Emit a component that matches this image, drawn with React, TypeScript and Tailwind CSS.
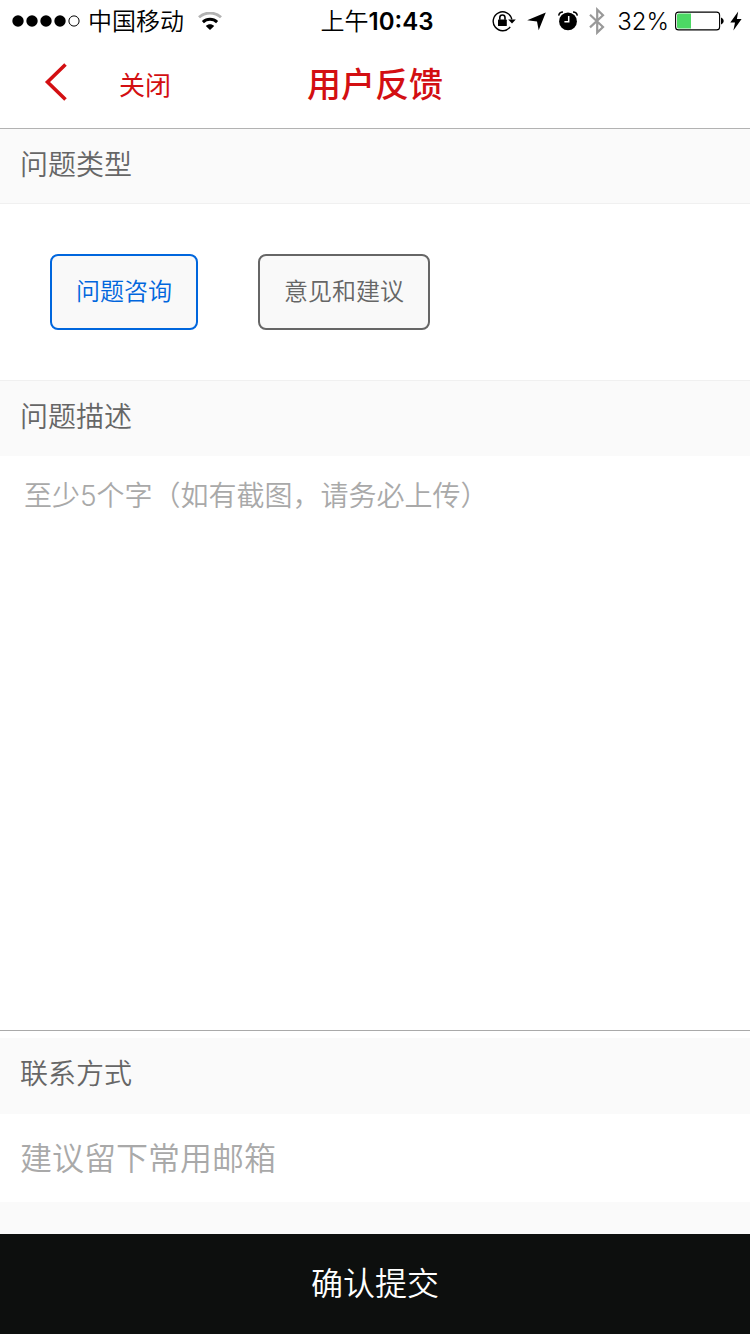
import { useState } from "react";

function SignalDots() {
  return (
    <svg width="68" height="12" viewBox="0 0 68 12" aria-hidden="true">
      <circle cx="6" cy="6" r="5.7" />
      <circle cx="20" cy="6" r="5.7" />
      <circle cx="34" cy="6" r="5.7" />
      <circle cx="48" cy="6" r="5.7" />
      <circle cx="62" cy="6" r="5.1" fill="none" stroke="#000" strokeWidth="1" />
    </svg>
  );
}

function WifiIcon() {
  return (
    <svg width="24" height="18" viewBox="0 0 24 18" fill="none" aria-hidden="true">
      <path d="M1 5.3C7.2 -0.4 16.8 -0.4 23 5.3" stroke="#b2b2b2" strokeWidth="2.8" />
      <path d="M4.9 10.2C9 6.4 15 6.4 19.1 10.2" stroke="#000" strokeWidth="3" />
      <path d="M12 18L7.8 13.9C10.2 11.8 13.8 11.8 16.2 13.9Z" fill="#000" />
    </svg>
  );
}

function RotationLockIcon() {
  return (
    <svg width="24" height="22" viewBox="0 0 24 22" fill="none" aria-hidden="true">
      <path d="M18.2 16.8A9.4 9.4 0 1 1 19.8 9.4" stroke="#000" strokeWidth="1.4" />
      <path d="M16.2 9.4H23.8L20 13.6Z" fill="#000" />
      <rect x="6" y="9.6" width="8.8" height="6.4" rx="0.6" fill="#000" />
      <path d="M7.8 9.8V7.6A2.6 2.6 0 0 1 13 7.6V9.8" stroke="#000" strokeWidth="1.6" />
    </svg>
  );
}

function LocationIcon() {
  return (
    <svg width="20" height="20" viewBox="0 0 20 20" aria-hidden="true">
      <path d="M18.8 1.4L11.7 19.2L10 10.4L0.2 9.2Z" />
    </svg>
  );
}

function AlarmIcon() {
  return (
    <svg width="20" height="20" viewBox="0 0 20 20" fill="none" aria-hidden="true">
      <circle cx="10" cy="10.4" r="8.9" fill="#000" />
      <path d="M0.7 4.6C1 2.4 2.6 0.9 5 0.9M19.3 4.6C19 2.4 17.4 0.9 15 0.9" stroke="#000" strokeWidth="1.5" />
      <path d="M10.7 5V10.7H6.4" stroke="#fff" strokeWidth="1.5" />
    </svg>
  );
}

function BluetoothIcon() {
  return (
    <svg width="16" height="28" viewBox="0 0 16 28" fill="none" aria-hidden="true">
      <path d="M1 7.8L14 20L8.2 25.6V2.6L14 8.2L1 20.4" stroke="#999" strokeWidth="2.2" />
    </svg>
  );
}

function BatteryIcon() {
  return (
    <svg width="49" height="20" viewBox="0 0 49 20" fill="none" aria-hidden="true">
      <rect x="0.6" y="1.1" width="44" height="17.8" rx="3" stroke="#000" strokeWidth="1.1" />
      <path d="M3.6 2.6H16V17.4H3.6A1.6 1.6 0 0 1 2 15.8V4.2A1.6 1.6 0 0 1 3.6 2.6Z" fill="#4cd964" />
      <path d="M46 6.5C49.6 8 49.6 12 46 13.5Z" fill="#000" />
    </svg>
  );
}

function BoltIcon() {
  return (
    <svg width="12" height="20" viewBox="0 0 12 20" aria-hidden="true">
      <path d="M8.2 0.4L0.3 11.4H5L3.4 19.4L11.6 8H6.9Z" />
    </svg>
  );
}

function StatusBar() {
  return (
    <div className="grid h-10 grid-cols-[1fr_auto_1fr] items-center px-3 pr-2 text-2xl leading-10 text-black">
      <div className="flex items-center">
        <SignalDots />
        <span className="ml-2 mr-3.5 pt-0.5">中国移动</span>
        <WifiIcon />
      </div>
      <div className="pt-0.5">
        上午<span className="font-semibold">10:43</span>
      </div>
      <div className="flex items-center justify-end">
        <div className="flex items-center gap-[11px]">
          <RotationLockIcon />
          <LocationIcon />
          <AlarmIcon />
          <BluetoothIcon />
        </div>
        <span className="ml-3 mr-1.5 pt-0.5">32%</span>
        <BatteryIcon />
        <span className="ml-1.5">
          <BoltIcon />
        </span>
      </div>
    </div>
  );
}

const labelClass = "block h-[76px] bg-[#fafafa] px-5 text-[28px] leading-[72px] text-[#666]";

const kinds = ["问题咨询", "意见和建议"];

export default function App() {
  const [kind, setKind] = useState(kinds[0]);

  return (
    <div className="flex min-h-screen flex-col bg-white font-['Inter','Noto_Sans_CJK_SC',sans-serif] font-[350]">
      <StatusBar />
      <header className="grid h-[89px] grid-cols-[1fr_auto_1fr] items-center border-b border-[#b2b2b2] text-[#d30f12]">
        <div className="flex items-center pl-11">
          <button type="button" aria-label="返回" className="-mt-1">
            <svg width="24" height="38" viewBox="0 0 24 38" fill="none" aria-hidden="true">
              <path d="M21.5 1.5L3.5 19L21.5 36.5" stroke="currentColor" strokeWidth="3.6" />
            </svg>
          </button>
          <button type="button" className="ml-[51px] pt-1 text-[26px] font-normal leading-10">
            关闭
          </button>
        </div>
        <h1 className="pt-0.5 text-[34px] font-medium leading-10">用户反馈</h1>
      </header>

      <form className="flex grow flex-col" onSubmit={(e) => e.preventDefault()}>
        <h2 className="h-[75px] border-b border-[#f0f0f0] bg-[#fafafa] px-5 text-[28px] leading-[72px] text-[#666]">
          问题类型
        </h2>
        <div className="flex flex-wrap gap-[60px] p-[50px]">
          {kinds.map((k) => (
            <button
              key={k}
              type="button"
              aria-pressed={k === kind}
              onClick={() => setKind(k)}
              className={
                k === kind
                  ? "h-[76px] rounded-lg border-2 border-[#0066dd] bg-[#f9f9f9] px-6 text-2xl text-[#0066dd]"
                  : "h-[76px] rounded-lg border-2 border-[#666] bg-[#f9f9f9] px-6 text-2xl text-[#666]"
              }
            >
              {k}
            </button>
          ))}
        </div>

        <label htmlFor="description" className={`${labelClass} border-t border-[#f0f0f0]`}>
          问题描述
        </label>
        <textarea
          id="description"
          placeholder="至少5个字（如有截图，请务必上传）"
          className="mb-[7px] block w-full grow resize-none border-b border-[#aaa] px-6 py-5 text-[28px] leading-10 text-[#333] outline-none placeholder:text-[#a9a9a9]"
        />

        <label htmlFor="contact" className={labelClass}>
          联系方式
        </label>
        <input
          id="contact"
          type="text"
          placeholder="建议留下常用邮箱"
          className="block h-[88px] w-full px-5 text-[32px] text-[#333] outline-none placeholder:text-[#a9a9a9]"
        />
        <div className="h-8 bg-[#fafafa]" />
        <button type="submit" className="h-[100px] w-full bg-[#0d0f0e] text-[32px] text-white">
          确认提交
        </button>
      </form>
    </div>
  );
}
